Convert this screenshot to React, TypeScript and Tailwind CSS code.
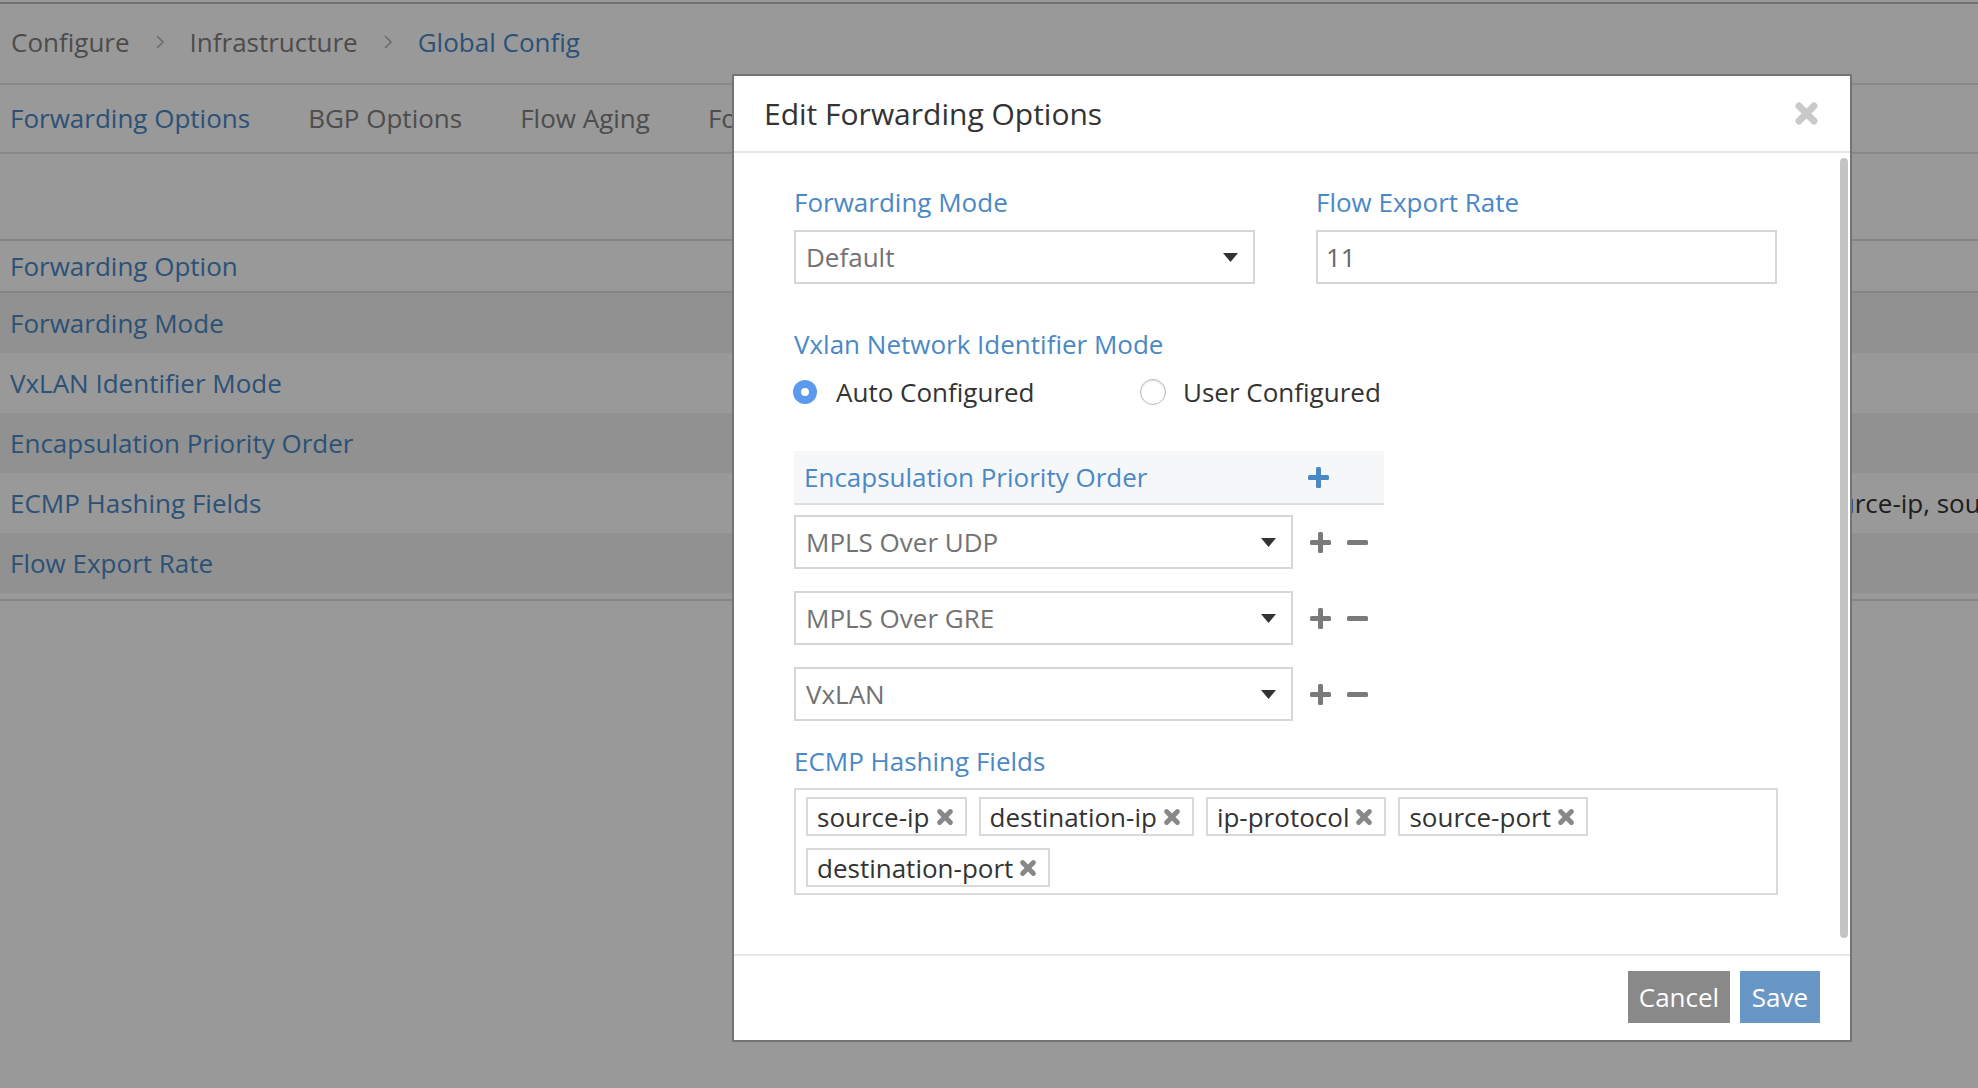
import React from "react";

const BLUE = "text-[#4a88c6]";

function Chevron() {
  return (
    <svg width="10" height="16" viewBox="0 0 10 16" className="shrink-0">
      <polyline points="2,2 8,8 2,14" fill="none" stroke="#b3b3b3" strokeWidth="1.6" />
    </svg>
  );
}

function Caret() {
  return (
    <svg width="15" height="9" viewBox="0 0 15 9" className="shrink-0">
      <polygon points="0,0 15,0 7.5,9" fill="#333333" />
    </svg>
  );
}

function Times({ size, color, width }: { size: number; color: string; width: number }) {
  return (
    <svg width={size} height={size} viewBox="0 0 20 20" className="shrink-0">
      <line x1="4" y1="4" x2="16" y2="16" stroke={color} strokeWidth={width} strokeLinecap="round" />
      <line x1="16" y1="4" x2="4" y2="16" stroke={color} strokeWidth={width} strokeLinecap="round" />
    </svg>
  );
}

function Plus({ color }: { color: string }) {
  return (
    <svg width="21" height="21" viewBox="0 0 21 21" className="shrink-0">
      <rect x="8" y="0" width="5" height="21" rx="1.5" fill={color} />
      <rect x="0" y="8" width="21" height="5" rx="1.5" fill={color} />
    </svg>
  );
}

function Minus() {
  return (
    <svg width="21" height="21" viewBox="0 0 21 21" className="shrink-0">
      <rect x="0" y="8" width="21" height="5" rx="1.5" fill="#7a7a7a" />
    </svg>
  );
}

function SelectBox({ value, width }: { value: string; width: string }) {
  return (
    <div
      className={`${width} flex h-[54px] items-center justify-between border-2 border-[#d6d6d6] bg-white pl-[10px] pr-[15px] text-[#727272]`}
    >
      <span>{value}</span>
      <Caret />
    </div>
  );
}

const tableRows = [
  { label: "Forwarding Mode", value: "Default" },
  { label: "VxLAN Identifier Mode", value: "Auto Configured" },
  { label: "Encapsulation Priority Order", value: "MPLS Over UDP, MPLS Over GRE, VxLAN" },
  {
    label: "ECMP Hashing Fields",
    value: "destination-ip, destination-port, ip-protocol, source-ip, source-port",
  },
  { label: "Flow Export Rate", value: "11" },
];

const encapRows = ["MPLS Over UDP", "MPLS Over GRE", "VxLAN"];
const hashTags = ["source-ip", "destination-ip", "ip-protocol", "source-port", "destination-port"];

export default function App() {
  return (
    <div className="relative h-[1088px] w-full overflow-hidden bg-white font-['Open_Sans',sans-serif] text-[26px] leading-[36px]">
      {/* page behind the dialog */}
      <div className="mt-[2px] border-t-2 border-[#bdbdbd]">
        <div className="flex h-[81px] items-center gap-[25px] border-b-2 border-[#e3e3e3] pb-[3px] pl-[11px] text-[#7f7f7f]">
          <span>Configure</span>
          <Chevron />
          <span>Infrastructure</span>
          <Chevron />
          <span className={BLUE}>Global Config</span>
        </div>
        <div className="flex h-[69px] items-center gap-[58px] border-b-2 border-[#e3e3e3] pb-[1px] pl-[10px] text-[#808080]">
          <span className={BLUE}>Forwarding Options</span>
          <span>BGP Options</span>
          <span>Flow Aging</span>
          <span>Forwarding Classes</span>
          <span>QoS</span>
        </div>
        <div className="h-[85px]" />
        <div className="border-b-2 border-[#dedede] pb-[6px]">
          <div className="flex h-[54px] items-center border-y-2 border-[#dcdcdc] pl-[10px]">
            <span className={BLUE}>Forwarding Option</span>
          </div>
          {tableRows.map((r, i) => (
            <div
              key={r.label}
              className={`grid h-[60px] grid-cols-[1264px_1fr] items-center ${i % 2 === 0 ? "bg-[#f2f2f2]" : "bg-white"}`}
            >
              <span className={`pl-[10px] ${BLUE}`}>{r.label}</span>
              <span className="whitespace-nowrap pl-[10px] text-[#333333]">{r.value}</span>
            </div>
          ))}
        </div>
      </div>

      {/* backdrop */}
      <div className="fixed inset-0 bg-black/40" />

      {/* dialog */}
      <div className="absolute left-[732px] top-[74px] flex h-[968px] w-[1120px] flex-col border-2 border-[#747474] bg-white">
        <div className="flex h-[77px] shrink-0 items-center justify-between border-b-2 border-[#e6e6e6] pl-[30px] pr-[31px]">
          <span className="text-[30px] text-[#333333]">Edit Forwarding Options</span>
          <Times size={25} color="#c9c9c9" width={5.5} />
        </div>

        <div className="flex min-h-0 flex-1">
          <div className="flex-1 pl-[60px] pt-[31px]">
            <div className="flex gap-[61px]">
              <div className="w-[461px]">
                <div className={BLUE}>Forwarding Mode</div>
                <div className="mt-[10px]">
                  <SelectBox value="Default" width="w-[461px]" />
                </div>
              </div>
              <div className="w-[461px]">
                <div className={BLUE}>Flow Export Rate</div>
                <div className="mt-[10px] flex h-[54px] items-center border-2 border-[#d6d6d6] pl-[8px] text-[#666666]">
                  11
                </div>
              </div>
            </div>

            <div className={`mt-[42px] ${BLUE}`}>Vxlan Network Identifier Mode</div>
            <div className="mt-[12px] flex h-[36px] items-center text-[#333333]">
              <div className="ml-[-1px] flex w-[347px] items-center gap-[19px]">
                <span className="flex h-[24px] w-[24px] items-center justify-center rounded-full bg-[#5a9bee]">
                  <span className="h-[8px] w-[8px] rounded-full bg-white" />
                </span>
                <span>Auto Configured</span>
              </div>
              <div className="flex items-center gap-[17px]">
                <span className="h-[26px] w-[26px] rounded-full border border-[#b9b9b9] bg-white shadow-[inset_0_1px_2px_rgba(0,0,0,0.12)]" />
                <span>User Configured</span>
              </div>
            </div>

            <div className="mt-[41px] flex h-[54px] w-[590px] items-center border-b-2 border-[#dedede] bg-[#f6f7f9]">
              <span className={`w-[514px] pl-[10px] ${BLUE}`}>Encapsulation Priority Order</span>
              <Plus color="#4a88c6" />
            </div>
            <div className="mt-[10px] flex flex-col gap-[22px]">
              {encapRows.map((e) => (
                <div key={e} className="flex items-center">
                  <SelectBox value={e} width="w-[499px]" />
                  <div className="ml-[17px] flex items-center gap-[16px]">
                    <Plus color="#7a7a7a" />
                    <Minus />
                  </div>
                </div>
              ))}
            </div>

            <div className={`mt-[22px] ${BLUE}`}>ECMP Hashing Fields</div>
            <div className="mt-[9px] flex w-[984px] flex-wrap gap-[12px] border-2 border-[#dadada] pb-[6px] pl-[10px] pt-[7px]">
              {hashTags.map((t) => (
                <span
                  key={t}
                  className="flex h-[39px] items-center gap-[6px] border-2 border-[#d9d9d9] pl-[9px] pr-[11px] text-[#333333]"
                >
                  {t}
                  <Times size={18} color="#888888" width={5.5} />
                </span>
              ))}
            </div>
          </div>
          <div className="mr-[2px] w-[8px] pb-[16px] pt-[5px]">
            <div className="h-full rounded-full bg-[#c4c4c4]" />
          </div>
        </div>

        <div className="flex h-[86px] shrink-0 items-center justify-end gap-[10px] border-t-2 border-[#e6e6e6] pb-[2px] pr-[30px]">
          <button className="h-[52px] w-[102px] bg-[#898989] text-white">Cancel</button>
          <button className="h-[52px] w-[80px] bg-[#6997c5] text-white">Save</button>
        </div>
      </div>
    </div>
  );
}
